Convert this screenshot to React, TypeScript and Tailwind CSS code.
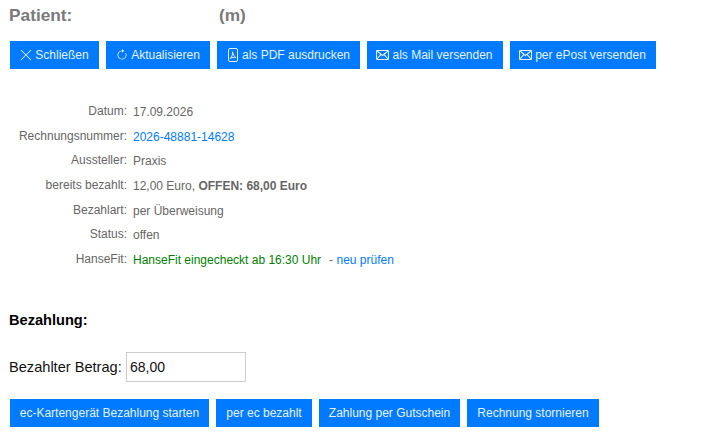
import { ReactNode } from 'react';

function CloseIcon() {
    return (
        <svg width="14" height="14" viewBox="0 0 16 16" fill="currentColor">
            <path d="M2.146 2.146a.5.5 0 0 1 .708 0L8 7.293l5.146-5.147a.5.5 0 0 1 .708.708L8.707 8l5.147 5.146a.5.5 0 0 1-.708.708L8 8.707l-5.146 5.147a.5.5 0 0 1-.708-.708L7.293 8 2.146 2.854a.5.5 0 0 1 0-.708z" />
        </svg>
    );
}

function RefreshIcon() {
    return (
        <svg width="12" height="12" viewBox="0 0 16 16" fill="currentColor">
            <path fillRule="evenodd" d="M8 3a5 5 0 1 0 4.546 2.914.5.5 0 0 1 .908-.417A6 6 0 1 1 8 2v1z" />
            <path d="M8 4.466V.534a.25.25 0 0 1 .41-.192l2.36 1.966c.12.1.12.284 0 .384L8.41 4.658A.25.25 0 0 1 8 4.466z" />
        </svg>
    );
}

function PdfIcon() {
    return (
        <svg width="12" height="14" viewBox="0 0 12 14" fill="none" stroke="currentColor" strokeWidth="1">
            <rect x="1.5" y="0.5" width="9" height="13" rx="1.5" />
            <path d="M3.2 10.5 C4.8 9 5.8 6.5 5.6 3.8 C6 6.5 7.2 8.5 8.8 9.6 C7 9 5 9.4 3.2 10.5 Z" />
        </svg>
    );
}

function MailIcon() {
    return (
        <svg width="13" height="10" viewBox="0 0 13 10" fill="none" stroke="currentColor" strokeWidth="1.1">
            <rect x="0.5" y="0.5" width="12" height="9" rx="1" />
            <path d="M1 1 L6.5 5.5 L12 1 M1 9 L5 4.3 M12 9 L8 4.3" />
        </svg>
    );
}

function ActionButton({ icon, children, className }: { icon?: ReactNode; children: ReactNode; className: string }) {
    return (
        <button className={`h-7 flex items-center justify-center bg-[#007bff] text-[#e6f1ff] text-xs ${className}`}>
            {icon}
            <span>{children}</span>
        </button>
    );
}

const rows: { label: string; value: ReactNode }[] = [
    { label: 'Datum:', value: '17.09.2026' },
    { label: 'Rechnungsnummer:', value: <span className="text-[#007bff]">2026-48881-14628</span> },
    { label: 'Aussteller:', value: 'Praxis' },
    { label: 'bereits bezahlt:', value: <>12,00 Euro, <b>OFFEN: 68,00 Euro</b></> },
    { label: 'Bezahlart:', value: 'per Überweisung' },
    { label: 'Status:', value: 'offen' },
    {
        label: 'HanseFit:',
        value: (
            <>
                <span className="text-[#008000]">HanseFit eingecheckt ab 16:30 Uhr</span>
                <span className="ml-2">- </span>
                <span className="text-[#007bff]">neu prüfen</span>
            </>
        ),
    },
];

export default function App() {
    return (
        <div className="w-[711px] h-[446px] overflow-hidden bg-white font-['Liberation_Sans',sans-serif]">
            <div className="flex h-[41px] pl-[9px] pt-[5px] text-[17.3px] leading-5 font-bold text-[#7a7a7a]">
                <div className="w-[210px]">Patient:</div>
                <div>(m)</div>
            </div>

            <div className="flex gap-[7px] pl-[10px]">
                <ActionButton icon={<CloseIcon />} className="w-[89px] gap-[2px] pr-px">Schließen</ActionButton>
                <ActionButton icon={<RefreshIcon />} className="w-[104px] gap-[3px]">Aktualisieren</ActionButton>
                <ActionButton icon={<PdfIcon />} className="w-[143px] gap-[3px]">als PDF ausdrucken</ActionButton>
                <ActionButton icon={<MailIcon />} className="w-[136px] gap-[3px] pr-px">als Mail versenden</ActionButton>
                <ActionButton icon={<MailIcon />} className="w-[146px] gap-[3px] pr-px">per ePost versenden</ActionButton>
            </div>

            <div className="mt-[29.67px] flex flex-col text-xs text-[#666666]">
                {rows.map((row) => (
                    <div key={row.label} className="flex h-[24.67px] items-center">
                        <div className="w-[127px] text-right">{row.label}</div>
                        <div className="ml-[6px] pt-[2px]">{row.value}</div>
                    </div>
                ))}
            </div>

            <div className="mt-[38.33px] pl-[9px] text-[14.6px] leading-5 font-bold text-black">Bezahlung:</div>

            <div className="mt-[22px] flex items-center pl-[9px] text-[14.6px] text-[#111111]">
                <span className="w-[117px] pt-[2px]">Bezahlter Betrag:</span>
                <input
                    readOnly
                    value="68,00"
                    className="w-[120px] h-[30px] border border-[#cccccc] px-[3px] text-sm text-[#111111] outline-none"
                />
            </div>

            <div className="mt-[17px] flex gap-[7px] pl-[10px]">
                <ActionButton className="w-[199px]">ec-Kartengerät Bezahlung starten</ActionButton>
                <ActionButton className="w-[96px]">per ec bezahlt</ActionButton>
                <ActionButton className="w-[141px]">Zahlung per Gutschein</ActionButton>
                <ActionButton className="w-[132px]">Rechnung stornieren</ActionButton>
            </div>
        </div>
    );
}
